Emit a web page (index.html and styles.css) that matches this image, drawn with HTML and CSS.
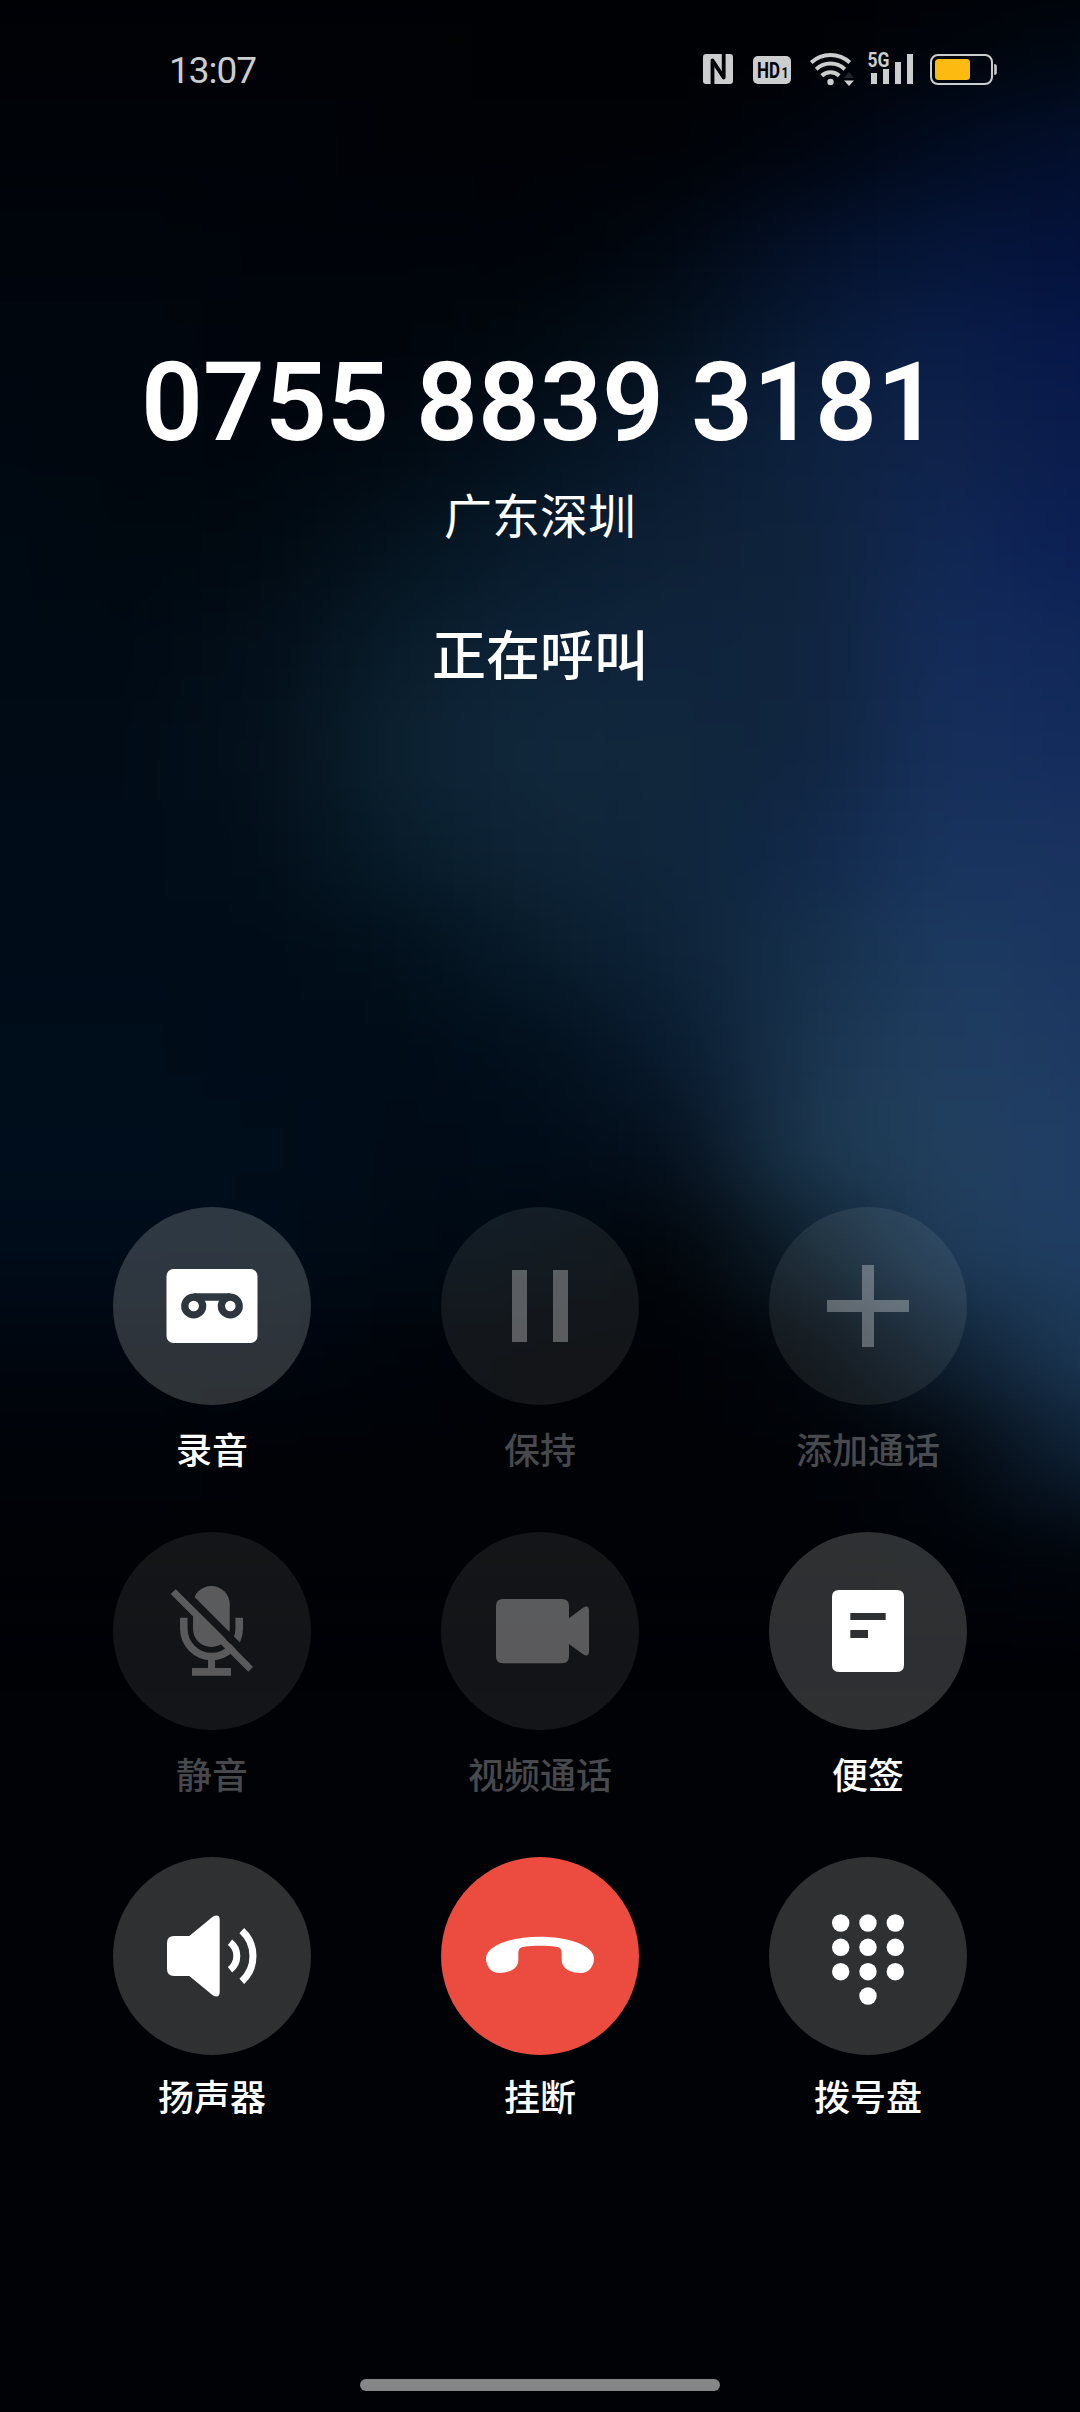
FILE: index.html
```html
<!DOCTYPE html>
<html lang="zh-CN">
<head>
<meta charset="utf-8">
<title>正在呼叫</title>
<link rel="stylesheet" href="styles.css">
</head>
<body>
<main class="screen">
  <div class="aurora" aria-hidden="true">
    <i style="background-image:linear-gradient(90deg,#000206 100px,#000206,#000206,#000206,#000104,#000104,#000104,#00040a,#000812 1180px)"></i>
    <i style="background-image:linear-gradient(90deg,#000308 100px,#000308,#000308,#000206,#000206,#000206,#00050f,#010c22,#030f2e 1180px)"></i>
    <i style="background-image:linear-gradient(90deg,#00050c 100px,#00050c,#00040a,#00040a,#000309,#010812,#04112a,#06163a,#04123c 1180px)"></i>
    <i style="background-image:linear-gradient(90deg,#00060e 100px,#00060e,#00050c,#00050c,#010910,#04111e,#091b38,#0a1e48,#06174a 1180px)"></i>
    <i style="background-image:linear-gradient(90deg,#000710 100px,#00070e,#00060e,#010a12,#041220,#0a1b30,#0d2240,#10234c,#0a1c4c 1180px)"></i>
    <i style="background-image:linear-gradient(90deg,#000a14 100px,#00080f,#010a12,#041420,#091c2e,#0d2036,#0f233c,#112855,#0b1f55 1180px)"></i>
    <i style="background-image:linear-gradient(90deg,#000a14 100px,#000a14,#030f1a,#091d2c,#0e2338,#0f243c,#10243e,#142c5a,#102758 1180px)"></i>
    <i style="background-image:linear-gradient(90deg,#000b16 100px,#000b16,#04121c,#0d2232,#11283c,#10273c,#10243e,#16305c,#132b5c 1180px)"></i>
    <i style="background-image:linear-gradient(90deg,#000c18 100px,#000c18,#020f1a,#081d2c,#0f2436,#0f263c,#11284a,#18345e,#19325f 1180px)"></i>
    <i style="background-image:linear-gradient(90deg,#000c18 100px,#000c18,#000d18,#02101c,#081c2c,#0e2338,#152f4a,#1c3a60,#1a3560 1180px)"></i>
    <i style="background-image:linear-gradient(90deg,#000d1a 100px,#000d1a,#000c18,#000c18,#020f1c,#091c30,#1a344e,#203e60,#1d3862 1180px)"></i>
    <i style="background-image:linear-gradient(90deg,#000d1c 100px,#000d1c,#000d1a,#000b16,#000c18,#05101e,#1c384f,#22405e,#1f3d66 1180px)"></i>
    <i style="background-image:linear-gradient(90deg,#000c1a 100px,#000c1a,#000c18,#000a14,#000812,#010509,#0e202e,#203c5a,#1f3d62 1180px)"></i>
    <i style="background-image:linear-gradient(90deg,#00060f 100px,#00060f,#000610,#00040a,#000206,#000206,#02060c,#0f2132,#1c3856 1180px)"></i>
    <i style="background-image:linear-gradient(90deg,#000308 100px,#000308,#000206,#000206,#000206,#000206,#000206,#02060c,#0f2338 1180px)"></i>
    <i style="background-image:linear-gradient(90deg,#000206 100px,#000206,#000206,#000206,#000206,#000206,#000206,#000308,#01060e 1180px)"></i>
  </div>

  <header class="status">
    <time class="clock">13:07</time>
    <div class="indicators">
      <svg class="nfc" viewBox="0 0 30 30" width="30" height="30"><rect width="30" height="30" rx="3" fill="currentColor"/><path d="M9.500 30V6.500L20.700 23.500V0" fill="none" stroke="#000206" stroke-width="3.800" stroke-linejoin="round"/></svg>
      <svg class="hd" viewBox="0 0 38 28" width="38" height="28"><rect width="38" height="28" rx="5" fill="currentColor"/><text class="hd-text" x="4" y="21.500" textLength="23" lengthAdjust="spacingAndGlyphs">HD</text><text class="hd-index" x="28.500" y="21.500" textLength="7" lengthAdjust="spacingAndGlyphs">1</text></svg>
      <svg class="wifi" viewBox="0 0 44 34" width="44" height="34"><g fill="none" stroke="currentColor" stroke-width="4"><path d="M1.200 10.500A28.500 28.500 0 0 1 39.800 10.500"/><path d="M6.200 17.200A21 21 0 0 1 34.800 17.200"/><path d="M11.800 23.800A12.500 12.500 0 0 1 29.200 23.800"/></g><circle cx="20.500" cy="30" r="3.200" fill="currentColor"/><path d="M39 20l5 6H34z" fill="#22262b"/><path d="M39 34l5-5.500H34z" fill="currentColor"/></svg>
      <svg class="signal" viewBox="0 -6 47 40" width="47" height="40"><path fill="currentColor" d="M4 22h6v11h-6zM16 18h6v15h-6zM28 11h6v22h-6zM40 3h6v30h-6z"/><text class="net-text" x="0.500" y="15.500" textLength="22" lengthAdjust="spacingAndGlyphs">5G</text></svg>
      <svg class="battery" viewBox="0 0 67 31" width="67" height="31"><rect x="1" y="1" width="61" height="29" rx="7" fill="none" stroke="currentColor" stroke-width="2"/><rect x="5" y="5" width="35" height="21" rx="3.500" fill="#fdbb12"/><path d="M64.200 10q2.600 0 2.600 2v7q0 2-2.600 2z" fill="currentColor"/></svg>
    </div>
  </header>

  <section class="caller">
    <h1 class="number">0755 8839 3181</h1>
    <p class="region">广东深圳</p>
    <p class="state">正在呼叫</p>
  </section>

  <section class="controls">
    <div class="control">
      <button class="disc"><svg viewBox="-50 -50 100 100"><mask id="tape"><rect x="-50" y="-50" width="100" height="100" fill="#fff"/><g fill="none" stroke="#000" stroke-width="7.300"><circle cx="-18.300" r="8.900"/><circle cx="18.300" r="8.900"/><path d="M-18.300-9H18.300"/></g></mask><rect x="-45.500" y="-37" width="91" height="74" rx="7" fill="currentColor" mask="url(#tape)"/></svg></button>
      <span class="label">录音</span>
    </div>
    <div class="control off">
      <button class="disc"><svg viewBox="-50 -50 100 100"><path fill="currentColor" d="M-28-36h15v72h-15zM13-36h15v72h-15z"/></svg></button>
      <span class="label">保持</span>
    </div>
    <div class="control off">
      <button class="disc"><svg viewBox="-50 -50 100 100"><path fill="currentColor" d="M-6-41H6V-6H41V6H6V41H-6V6H-41V-6H-6z"/></svg></button>
      <span class="label">添加通话</span>
    </div>
    <div class="control off">
      <button class="disc"><svg viewBox="-50 -50 100 100"><mask id="muted"><path d="M-41.300-37L-36-42 41 35.700 36.300 40.700z" fill="#fff"/><g fill="#fff"><rect x="-19" y="-45" width="36.700" height="61" rx="18.350"/><path d="M-4 25H3V37H19V44.700H-20V37H-4z"/></g><path d="M-28.200-13.300V-2.500A27.700 28 0 0 0 27.200-2.500V-13.300" fill="none" stroke="#fff" stroke-width="7.500"/><path d="M-50-66.500L50 33.500V44.300L-50-55.700z" fill="#000"/></mask><rect x="-50" y="-50" width="100" height="100" fill="currentColor" mask="url(#muted)"/></svg></button>
      <span class="label">静音</span>
    </div>
    <div class="control off">
      <button class="disc"><svg viewBox="-50 -50 100 100"><path fill="currentColor" d="M-37-32H22Q29-32 29-25V-12.700L43-23.300Q49-27 49-20V20Q49 27 43 23.300L29 13V25.300Q29 32.300 22 32.300H-37Q-44 32.300-44 25.300V-25Q-44-32-37-32z"/></svg></button>
      <span class="label">视频通话</span>
    </div>
    <div class="control">
      <button class="disc"><svg viewBox="-50 -50 100 100"><path fill="currentColor" fill-rule="evenodd" d="M-29-41H29Q36-41 36-34V34Q36 41 29 41H-29Q-36 41-36 34V-34Q-36-41-29-41zM-17.700-18V-11H17.700V-18zM-17.700-1V7H0V-1z"/></svg></button>
      <span class="label">便签</span>
    </div>
    <div class="control last">
      <button class="disc"><svg viewBox="-50 -50 100 100"><path fill="currentColor" d="M-38-20H-22.700L1-39.500Q7.700-42.500 7.700-36V36Q7.700 42.500 1 39.500L-22.700 20H-38Q-45 20-45 13V-13Q-45-20-38-20z"/><path d="M18-13.700A17.200 17.200 0 0 1 18 13.700M29.800-25.300A34.200 34.200 0 0 1 29.800 25.300" fill="none" stroke="currentColor" stroke-width="7"/></svg></button>
      <span class="label">扬声器</span>
    </div>
    <div class="control last">
      <button class="disc hangup"><svg viewBox="-60 -60 120 120" class="wide"><path fill="currentColor" d="M0-19.300C27-19.300 54-11 54 2.500C54 11 48 17 41 17C31 17 21.700 13 21.700 4V-2C21.700-7 20-8.700 16-9.200C6-10.600-6-10.600-16-9.200C-20-8.700-21.700-7-21.700-2V4C-21.700 13-31 17-41 17C-48 17-54 11-54 2.500C-54-11-27-19.300 0-19.300z"/></svg></button>
      <span class="label">挂断</span>
    </div>
    <div class="control last">
      <button class="disc"><svg viewBox="-50 -50 100 100"><g fill="currentColor"><circle cx="-27.300" cy="-33" r="8.700"/><circle cy="-33" r="8.700"/><circle cx="27.300" cy="-33" r="8.700"/><circle cx="-27.300" cy="-8.700" r="8.700"/><circle cy="-8.700" r="8.700"/><circle cx="27.300" cy="-8.700" r="8.700"/><circle cx="-27.300" cy="15.700" r="8.700"/><circle cy="15.700" r="8.700"/><circle cx="27.300" cy="15.700" r="8.700"/><circle cy="40" r="8.700"/></g></svg></button>
      <span class="label">拨号盘</span>
    </div>
  </section>

  <div class="home-bar"></div>
</main>
</body>
</html>
```
FILE: styles.css
```css
* {
  box-sizing: border-box;
}

body {
  margin: 0;
  background: #000206;
  font-family: Roboto, "Noto Sans CJK SC", sans-serif;
}

.screen {
  position: relative;
  display: flex;
  flex-direction: column;
  width: 1080px;
  height: 2412px;
  overflow: hidden;
  color: #fff;
}

/* Blurred horizontal bands that blend into the wallpaper glow.
   They run 100px past each side so the blur never fades at the edges. */
.aurora {
  position: absolute;
  inset: 0 -100px auto;
  z-index: -1;
  filter: blur(38px);
}

.aurora i {
  display: block;
  height: 100px;
}

.status {
  display: flex;
  justify-content: space-between;
  align-items: center;
  height: 140px;
  padding: 0 83px 0 169px;
  color: #cccdcf;
}

.clock {
  font-size: 37px;
  line-height: 44px;
  letter-spacing: -1px;
  padding-top: 2px;
}

.indicators {
  display: flex;
  align-items: center;
  margin-top: -2px;
}

.hd { margin: 2px 0 0 20px; }
.wifi { margin: -1px 0 0 19px; }
.signal { margin: -8px 0 0 13px; }
.battery { margin: 1px 0 0 16px; }

.hd-text,
.hd-index {
  fill: #000206;
  font-weight: 700;
}

.hd-text { font-size: 22px; }
.hd-index { font-size: 14px; }

.net-text {
  fill: currentColor;
  font-size: 20px;
  font-weight: 700;
}

.caller {
  display: flex;
  flex-direction: column;
  align-items: center;
  height: 1067px;
  padding-top: 199px;
}

.number,
.region,
.state {
  margin: 0;
  white-space: nowrap;
}

.number {
  font-size: 108.5px;
  font-weight: 600;
  line-height: 128px;
}

.region {
  margin-top: 19px;
  font-size: 48px;
  line-height: 64px;
}

.state {
  margin-top: 70px;
  font-size: 54px;
  font-weight: 500;
  line-height: 76px;
}

.controls {
  display: grid;
  grid-template-columns: repeat(3, 328px);
  grid-auto-rows: 325px;
  justify-content: center;
}

.control {
  display: flex;
  flex-direction: column;
  align-items: center;
  gap: 22px;
}

.control.last { gap: 19px; }

.disc {
  display: grid;
  place-items: center;
  width: 198px;
  height: 198px;
  padding: 0;
  border: 0;
  border-radius: 50%;
  background: rgba(248, 255, 250, 0.185);
  color: #fff;
}

.disc svg {
  width: 100px;
  height: 100px;
}

.disc .wide {
  width: 120px;
  height: 120px;
}

.disc.hangup { background: #ec4b3f; }

.label {
  font-size: 36px;
  font-weight: 500;
  line-height: 50px;
}

.off .disc {
  background: rgba(240, 255, 240, 0.078);
  color: rgba(255, 255, 255, 0.3);
}

.off .label { color: rgba(255, 255, 255, 0.28); }

.home-bar {
  width: 360px;
  height: 12px;
  margin: auto auto 21px;
  border-radius: 6px;
  background: #858688;
}
```
